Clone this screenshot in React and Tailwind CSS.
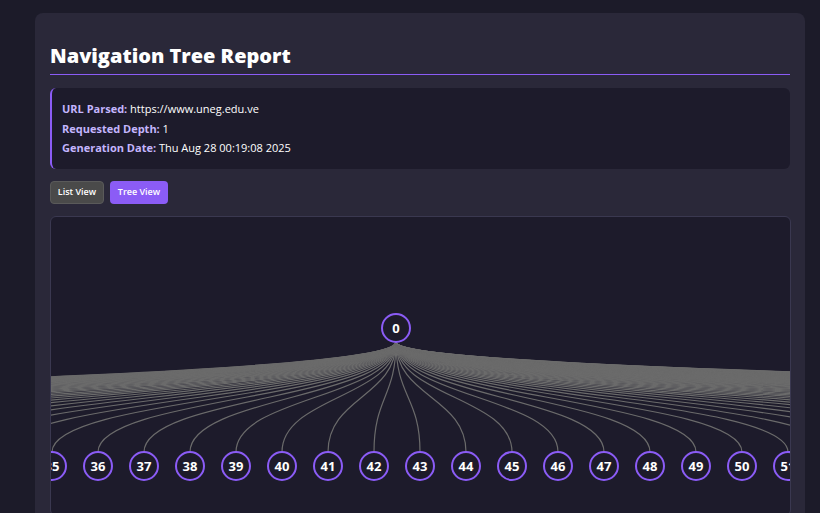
export default function App() {
  const nodes = [];
  for (let k = 1; k <= 110; k++) nodes.push({ k, x: 47 + (k - 36) * 46 });
  const visible = nodes.filter(n => n.x > -20 && n.x < 770);
  const rx = 345, ry = 111, cy = 249;
  return (
    <div className="w-[820px] h-[513px] overflow-hidden bg-[#1c1b29] pt-[13px] pl-[35px]" style={{ fontFamily: "'Open Sans', Lato, sans-serif" }}>
      <div className="w-[770px] h-[520px] rounded-lg bg-[#2a2839] px-[15px] pt-[30px]">
        <h1 className="text-[20px] font-extrabold text-white leading-[26px] pb-[5px] border-b border-[#8b5cf6]">Navigation Tree Report</h1>
        <div className="mt-[13px] rounded-md border-l-2 border-[#8b5cf6] bg-[#1d1b2b] px-[10px] py-[11px] text-[11px] text-white leading-[19.5px]">
          <div><span className="font-bold text-[#c4b5fd]">URL Parsed:</span> https://www.uneg.edu.ve</div>
          <div><span className="font-bold text-[#c4b5fd]">Requested Depth:</span> 1</div>
          <div><span className="font-bold text-[#c4b5fd]">Generation Date:</span> Thu Aug 28 00:19:08 2025</div>
        </div>
        <div className="flex gap-[6px] mt-[12px]">
          <button className="h-[23px] w-[54px] rounded bg-[#4a4a4a] border border-[#5a5a5a] text-white text-[9px] font-semibold">List View</button>
          <button className="h-[23px] w-[58px] rounded bg-[#8b5cf6] text-white text-[9px] font-semibold">Tree View</button>
        </div>
        <div className="mt-[12px] w-[741px] h-[300px] rounded-md border border-[#3a3850] bg-[#1d1b2b] overflow-hidden relative">
          <svg width="741" height="300" className="absolute left-0 top-0">
            {nodes.map(n => (
              <path key={"l" + n.k} d={`M${rx},${ry + 14} C${rx},${(ry + cy) / 2} ${n.x},${(ry + cy) / 2} ${n.x},${cy - 14}`} fill="none" stroke="#6b6b6b" strokeWidth="1.2" />
            ))}
            {[{ k: 0, x: rx, y: ry }, ...visible.map(n => ({ ...n, y: cy }))].map(n => (
              <g key={n.k}>
                <circle cx={n.x} cy={n.y} r="14" fill="#1d1b2b" stroke="#8b5cf6" strokeWidth="2" />
                <text x={n.x} y={n.y + 5} textAnchor="middle" fill="#fff" fontSize="13" fontWeight="bold" fontFamily="'Open Sans', sans-serif">{n.k}</text>
              </g>
            ))}
          </svg>
        </div>
      </div>
    </div>
  );
}
